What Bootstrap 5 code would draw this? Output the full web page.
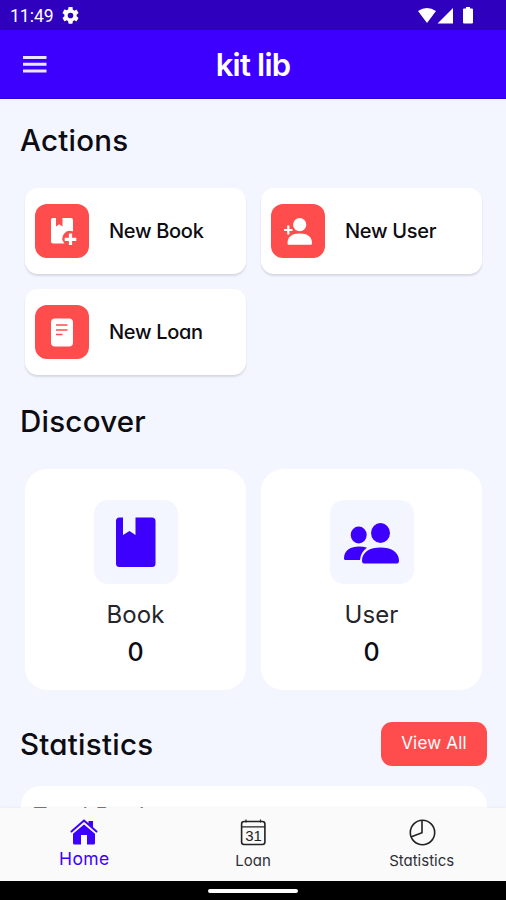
<!DOCTYPE html>
<html lang="en">
<head>
<meta charset="utf-8">
<meta name="viewport" content="width=device-width, initial-scale=1">
<title>kit lib</title>
<link href="https://cdn.jsdelivr.net/npm/bootstrap@5.3.0/dist/css/bootstrap.min.css" rel="stylesheet">
<style>
  body { font-family: Inter, "Open Sans", sans-serif; font-feature-settings: "cv11"; color: #0c0c12; background: #f3f6ff; }
  svg { display: block; flex: none; }
  .screen { height: 900px; }
  .status { height: 30px; background: #2f00bd; padding: 1px 33px 0 10px; font: 400 17.5px/30px Roboto, sans-serif; }
  .topbar { height: 69px; background: #3d00ff; border-bottom: 1px solid #2a00d8; }
  .menu-btn { width: 70px; padding-left: 23px; }
  .brand { font-size: 31px; font-weight: 600; line-height: 1; letter-spacing: -.8px; }
  .heading { font-size: 29.5px; font-weight: 500; line-height: 36px; padding-left: 20px; letter-spacing: .25px; }
  .tiles { display: grid; grid-template-columns: 221px 221px; column-gap: 15px; row-gap: 15px; padding-left: 25px; }
  .action { height: 86px; border-radius: 13px; padding-left: 10px; gap: 20px; font-size: 20px; font-weight: 500; letter-spacing: -.3px; box-shadow: 0 2px 2px rgba(40,40,60,.14); }
  .action-icon { width: 54px; height: 54px; border-radius: 12px; background: #ff4d4d; }
  .stat { height: 221px; border-radius: 22px; padding-top: 31px; }
  .stat-icon { width: 84px; height: 84px; border-radius: 14px; background: #f3f6ff; }
  .stat-name { font-size: 24px; line-height: 30px; margin-top: 16px; color: #25252b; letter-spacing: .1px; }
  .stat-num { font-size: 25px; font-weight: 500; line-height: 30px; margin-top: 7px; }
  .view-all { width: 106px; height: 44px; border-radius: 11px; background: #ff4d4d; color: #fff; font-size: 17px; padding: 0; margin-right: 19px; letter-spacing: .2px; }
  .total { height: 22px; margin: 20px 19px 0 21px; border-radius: 20px 20px 0 0; padding: 15px 0 0 12px; font-size: 22.5px; line-height: 30px; letter-spacing: .6px; color: #777; }
  .tabs { height: 73px; background: #fafafa; box-shadow: 0 -1px 2px rgba(0,0,0,.04); color: #303036; font-size: 15px; line-height: 20px; }
  .tab { padding-top: 10px; flex: 1 1 0; }
  .tab span { padding-top: 3px; }
  .tab.on { color: #3d00ff; font-size: 17.5px; letter-spacing: .4px; }
  .gesture { height: 19px; }
  .pill { width: 90px; height: 4px; border-radius: 2px; }
  .h-actions { padding-top: 23px; }
  .action-tiles { margin-top: 30px; }
  .h-discover { padding-top: 28px; }
  .discover-tiles { margin-top: 30px; }
  .stats-row { margin-top: 32px; }
</style>
</head>
<body>
<div class="screen d-flex flex-column overflow-hidden">
  <div class="status d-flex align-items-center text-white">
    <span class="clock">11:49</span>
    <svg class="ms-2" width="17" height="17" viewBox="2 2 20 20" fill="#fff"><path d="M19.14 12.94a7 7 0 0 0 0-1.88l2.03-1.58a.5.5 0 0 0 .12-.61l-1.92-3.32a.5.5 0 0 0-.59-.22l-2.39.96a7 7 0 0 0-1.62-.94l-.36-2.54A.5.5 0 0 0 13.92 2h-3.84a.5.5 0 0 0-.47.41l-.36 2.54a7.3 7.3 0 0 0-1.62.94l-2.39-.96a.5.5 0 0 0-.59.22L2.74 8.87a.5.5 0 0 0 .12.61l2.03 1.58a7 7 0 0 0 0 1.88l-2.03 1.58a.5.5 0 0 0-.12.61l1.92 3.32c.12.22.37.29.59.22l2.39-.96c.5.38 1.03.7 1.62.94l.36 2.54c.05.24.24.41.47.41h3.84c.24 0 .44-.17.47-.41l.36-2.54a7 7 0 0 0 1.62-.94l2.39.96c.22.08.47 0 .59-.22l1.92-3.32a.5.5 0 0 0-.12-.61zM12 15.300a3.300 3.300 0 1 1 0-6.600 3.300 3.300 0 0 1 0 6.600z"/></svg>
    <svg class="ms-auto" width="55" height="18" viewBox="0 0 55 18" fill="#fff"><path d="M0 4Q9 -2 18 4L9 16zM35 1v15.500H19.500zM46 1.500h2V0h4v1.500h2q1 0 1 1v13q0 1-1 1h-8q-1 0-1-1v-13q0-1 1-1z"/></svg>
  </div>
  <header class="topbar d-flex align-items-center text-white">
    <div class="menu-btn"><svg width="24" height="17" viewBox="0 0 24 17" fill="#e9e6ff"><path d="M0 0h23.500v3H0zM0 6.700h23.500v3H0zM0 13.400h23.500v3H0z"/></svg></div>
    <div class="brand flex-fill text-center">kit lib</div>
    <div class="menu-btn"></div>
  </header>
  <main class="flex-fill overflow-hidden">
    <h1 class="heading mb-0 h-actions">Actions</h1>
    <div class="tiles action-tiles">
      <div class="action bg-white d-flex align-items-center">
        <div class="action-icon">
          <svg width="54" height="54" viewBox="0 0 54 54"><path fill="#fff" d="M18 14h3v8.500l3.200-2.300 3.300 2.300V14H36q2 0 2 2v11.500a7.500 7.500 0 0 0-8.500 12H18q-2 0-2-2V16q0-2 2-2z"/><path stroke="#fff" stroke-width="3.200" d="M35.500 29.500v11.500M29.700 35.300h11.600"/></svg>
        </div><span>New Book</span>
      </div>
      <div class="action bg-white d-flex align-items-center">
        <div class="action-icon">
          <svg width="54" height="54" viewBox="0 0 54 54"><circle cx="28.700" cy="20.700" r="6.600" fill="#fff"/><path fill="#fff" d="M16.500 39.500C16.500 32.500 21 29.500 28.700 29.500S41 32.500 41 39.500q0 1.200-1.200 1.200H17.700q-1.200 0-1.200-1.200z"/><path stroke="#fff" stroke-width="2.200" d="M17.300 21.500v9M13 26h8.500"/></svg>
        </div><span>New User</span>
      </div>
      <div class="action bg-white d-flex align-items-center">
        <div class="action-icon">
          <svg width="54" height="54" viewBox="0 0 54 54"><rect x="16" y="13.500" width="22" height="28" rx="4" fill="#fff"/><path stroke="#ff4d4d" stroke-width="1.700" d="M21 20h11.500M21 25h11.500M21 29.500h6.500"/></svg>
        </div><span>New Loan</span>
      </div>
    </div>
    <h1 class="heading mb-0 h-discover">Discover</h1>
    <div class="tiles discover-tiles">
      <div class="stat bg-white d-flex flex-column align-items-center">
        <div class="stat-icon"><svg width="84" height="84" viewBox="0 0 84 84"><path fill="#3d00ff" d="M25.500 17.500H29V35l6.500-4 6 4V17.500H58q3.500 0 3.500 3.500v42.500q0 3.500-3.500 3.500H25.500q-3.500 0-3.500-3.500V21q0-3.500 3.500-3.500z"/></svg></div>
        <div class="stat-name">Book</div>
        <div class="stat-num">0</div>
      </div>
      <div class="stat bg-white d-flex flex-column align-items-center">
        <div class="stat-icon"><svg width="84" height="84" viewBox="0 0 84 84" fill="#3d00ff"><ellipse cx="28.700" cy="35" rx="8" ry="8.500"/><ellipse cx="50.500" cy="33" rx="9.500" ry="10"/><path d="M14 58.500C14 50 21 46.500 29 46.500q4.500 0 8 1.200-6.500 4.500-7 12.300H15.500q-1.500 0-1.500-1.500zM32 60.500C32 52 40 47.500 50.500 47.500S69 52 69 60.500q0 3-2 3H34q-2 0-2-3z"/></svg></div>
        <div class="stat-name">User</div>
        <div class="stat-num">0</div>
      </div>
    </div>
    <div class="d-flex align-items-center stats-row">
      <h1 class="heading m-0">Statistics</h1>
      <button class="btn view-all ms-auto">View All</button>
    </div>
    <div class="total bg-white overflow-hidden">Total Book</div>
  </main>
  <nav class="tabs d-flex position-relative">
    <div class="tab on d-flex flex-column align-items-center">
      <svg width="28" height="28" viewBox="0 0 28 28"><path fill="#3d00ff" d="M14 6.500l11 9.300V25q0 1.500-1.500 1.500H17V17h-6v9.500H4.500Q3 26.500 3 25v-9.200zM18.500 3H23v7l-4.500-4z"/><path fill="none" stroke="#3d00ff" stroke-width="2" stroke-linecap="round" d="M1.500 13.500L14 2.500l12.500 11"/><path fill="none" stroke="#fafafa" stroke-width=".8" d="M2.500 15L14 5l11.500 10"/></svg>
      <span>Home</span>
    </div>
    <div class="tab d-flex flex-column align-items-center">
      <svg width="28" height="30" viewBox="0 0 28 30"><rect x="2.600" y="3.500" width="23.300" height="23" rx="2.500" fill="none" stroke="#222" stroke-width="1.600"/><path stroke="#222" stroke-width="1.200" d="M3 8.800h23M7 1.500v3M21.500 1.500v3"/><text x="14.500" y="22.800" text-anchor="middle" font-family="Liberation Sans, sans-serif" font-size="15" fill="#222">31</text></svg>
      <span>Loan</span>
    </div>
    <div class="tab d-flex flex-column align-items-center">
      <svg width="28" height="30" viewBox="0 0 28 30" fill="none" stroke="#222" stroke-width="1.600"><circle cx="14.500" cy="14.500" r="12.200"/><path d="M14 2.300v12.500L2.800 19"/></svg>
      <span>Statistics</span>
    </div>
  </nav>
  <div class="gesture bg-black d-flex align-items-center justify-content-center"><div class="pill bg-white"></div></div>
</div>
<script src="https://cdn.jsdelivr.net/npm/bootstrap@5.3.0/dist/js/bootstrap.bundle.min.js"></script>
</body>
</html>
